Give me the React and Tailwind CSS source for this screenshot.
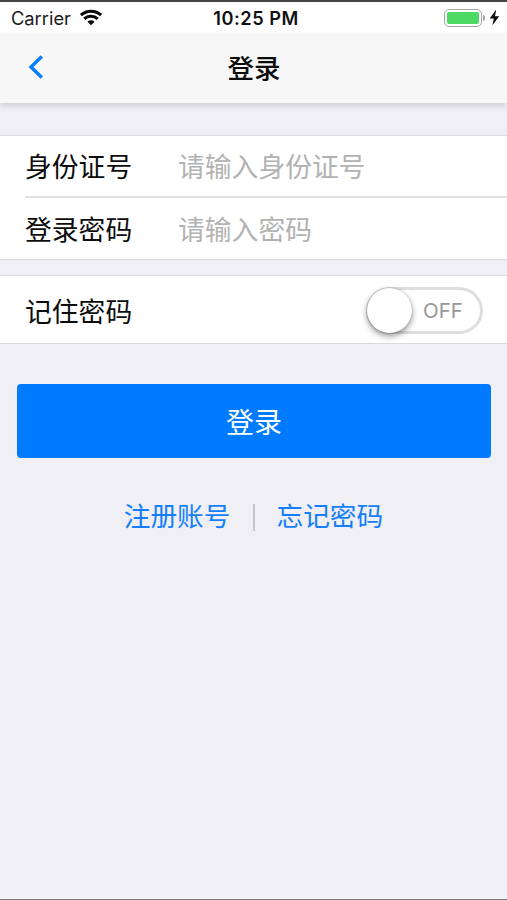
function WifiIcon() {
  return (
    <svg className="-mt-px ml-[6px] h-[17px] w-[24px]" viewBox="0 0 24 17" fill="none" stroke="#080808" strokeWidth="3.1">
      <path d="M1.9 6.2 A15 15 0 0 1 22.1 6.2" />
      <path d="M5.3 9.9 A9.7 9.7 0 0 1 18.7 9.9" />
      <path d="M12 16.2 L8.5 12.8 A5 5 0 0 1 15.5 12.8 Z" fill="#080808" stroke="none" />
    </svg>
  );
}

function StatusBar() {
  return (
    <div className="grid h-[33px] grid-cols-[1fr_auto_1fr] items-center border-t-2 border-[#444446] bg-white font-['Inter','Liberation_Sans',sans-serif] text-[#1a1a1a]">
      <div className="flex items-center pl-[11px]">
        <span className="w-[62px] whitespace-nowrap text-[18.3px] leading-[30px]">Carrier</span>
        <WifiIcon />
      </div>
      <span className="pl-[5px] text-[18.2px] font-semibold leading-[30px] tracking-[0.5px] text-[#111]">10:25 PM</span>
      <div className="flex items-center justify-end pr-[7px]">
        <div className="h-[18px] w-[38px] rounded-[5px] border-[1.5px] border-[#a5a5a8] p-[2px]">
          <div className="h-full w-full rounded-[2px] bg-[#4cd964]" />
        </div>
        <div className="ml-px h-[6px] w-[2px] rounded-r-full bg-[#a5a5a8]" />
        <svg className="ml-[4px] h-[17px] w-[11px]" viewBox="0 0 11 17" fill="#080808">
          <path d="M7.2 0.5 L0.7 9.5 H4.9 L3.4 16.3 L10.2 7.2 H6 Z" />
        </svg>
      </div>
    </div>
  );
}

function Field({ label, placeholder, type, last }) {
  return (
    <label className={last ? "flex h-[62px] items-center pt-[5px]" : "flex h-[62px] items-center border-b-2 border-[#e2e2e3] pt-[5px]"}>
      <span className="w-[153px] shrink-0 text-[26.8px] leading-none">{label}</span>
      <input
        type={type}
        placeholder={placeholder}
        className="h-[50px] min-w-0 flex-1 bg-transparent text-[26.8px] outline-none placeholder:text-[#b2b2b2]"
      />
    </label>
  );
}

export default function App() {
  return (
    <div className="flex h-[900px] w-[507px] flex-col overflow-hidden border-b border-[#747477] bg-[#efeff4] font-['Liberation_Sans','Noto_Sans_CJK_SC',sans-serif] text-[#0c0c0c]">
      <StatusBar />
      <header className="grid h-[70px] shrink-0 grid-cols-[1fr_auto_1fr] items-center bg-[#f7f7f7] shadow-[0_3px_6px_rgba(0,0,0,0.13)]">
        <button aria-label="返回" className="-mt-[2px] ml-[28px] w-[16px]">
          <svg className="h-[24px] w-[16px]" viewBox="0 0 16 24" fill="none" stroke="#087cff" strokeWidth="3.4">
            <path d="M13.8 1.5 L3 12 L13.8 22.5" />
          </svg>
        </button>
        <h1 className="pl-px pt-[2px] text-[26.5px] font-medium leading-none">登录</h1>
      </header>
      <main className="flex flex-col pt-[32px]">
        <section className="h-[125px] border-y border-[#dcdcdf] bg-white pl-[25px]">
          <Field label="身份证号" placeholder="请输入身份证号" type="text" />
          <Field label="登录密码" placeholder="请输入密码" type="password" last />
        </section>
        <section className="mt-[15px] flex h-[69px] items-center justify-between border-y border-[#d9d9dc] bg-white pl-[25px] pr-[24px]">
          <span className="pt-[8px] text-[26.8px] leading-none">记住密码</span>
          <button className="mt-[2px] flex h-[47px] w-[117px] items-center rounded-full border-[3px] border-[#dedede]">
            <span className="-ml-[2px] size-[45px] shrink-0 rounded-full bg-white shadow-[0_3px_6px_rgba(0,0,0,0.42),0_0_2px_rgba(0,0,0,0.25)]" />
            <span className="ml-[11px] pt-[2px] font-['Inter','Liberation_Sans',sans-serif] text-[20.5px] text-[#999]">OFF</span>
          </button>
        </section>
        <button className="ml-[17px] mr-[16px] mt-[40px] h-[74px] rounded-[4px] bg-[#007aff] pt-[5px] text-[28px] text-white">登录</button>
        <nav className="mt-[41px] flex h-[36px] items-center justify-center text-[26.7px] leading-none text-[#157efb]">
          <a>注册账号</a>
          <span className="mx-[22px] h-[27px] w-[2px] bg-[#c5c5c9]" />
          <a>忘记密码</a>
        </nav>
      </main>
      <div className="mt-auto h-px bg-[#fafafa]" />
    </div>
  );
}
